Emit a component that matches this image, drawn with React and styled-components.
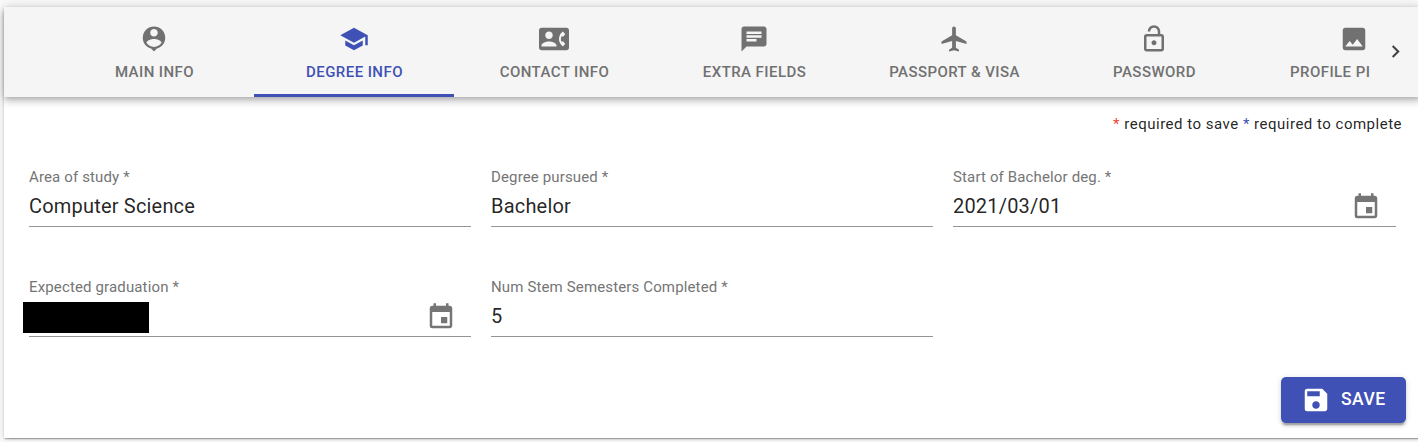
import React from "react";
import styled, { createGlobalStyle } from "styled-components";
import {
  MdPersonPin, MdSchool, MdContactPhone, MdChat, MdLocalAirport,
  MdImage, MdChevronRight, MdSave, MdEvent, MdOutlineLockOpen,
} from "react-icons/md";

const GlobalStyle = createGlobalStyle`
  *, *::before, *::after { box-sizing: border-box; }
  body {
    margin: 0;
    background: #fafafa;
    font-family: Roboto, "Liberation Sans", sans-serif;
    overflow: hidden;
  }
`;

const Page = styled.div`
  height: 442px;
  padding: 7px 0 0 4px;
  overflow: hidden;
`;

const Card = styled.main`
  display: flex;
  flex-direction: column;
  width: 1417px;
  height: 431px;
  background: #fff;
  box-shadow: 0 2.5px 1.25px -1.25px rgba(0, 0, 0, 0.2),
    0 1.25px 1.25px rgba(0, 0, 0, 0.14), 0 1.25px 3.75px rgba(0, 0, 0, 0.12),
    0 0 10px rgba(0, 0, 0, 0.08);
`;

const TabBar = styled.header`
  display: flex;
  flex: none;
  height: 90px;
  padding-left: 50px;
  background: #f5f5f5;
  box-shadow: 0 2.5px 5px -1.25px rgba(0, 0, 0, 0.2),
    0 5px 6.25px rgba(0, 0, 0, 0.14), 0 1.25px 12.5px rgba(0, 0, 0, 0.12);
`;

const TabList = styled.nav`
  display: flex;
  flex: none;
  width: 1316px;
  overflow: hidden;
`;

const Tab = styled.button`
  display: flex;
  flex: none;
  flex-direction: column;
  align-items: center;
  width: 200px;
  padding: 17px 0 0;
  border: 0;
  border-bottom: 3px solid ${(p) => (p.$active ? "#3f51b5" : "transparent")};
  background: none;
  color: ${(p) => (p.$active ? "#3f51b5" : "#717171")};
  font: 500 15px/20px Roboto, sans-serif;
  letter-spacing: 0.43px;
  white-space: nowrap;

  svg { width: 30px; height: 30px; margin-bottom: 8px; }
`;

const TabText = styled.span`
  padding-left: 1px;
`;

const ScrollButton = styled.button`
  display: flex;
  flex: none;
  align-items: center;
  justify-content: center;
  width: 50px;
  padding: 0 0 2px;
  border: 0;
  background: none;
  color: #424242;

  svg { width: 25px; height: 25px; }
`;

const Legend = styled.p`
  margin: 17px 19px 0 0;
  color: rgba(0, 0, 0, 0.87);
  font-size: 15px;
  line-height: 20px;
  letter-spacing: 0.5px;
  text-align: right;
`;

const Mark = styled.span`
  color: ${(p) => p.$color};
`;

const Fields = styled.form`
  display: grid;
  grid-template-columns: 442px 442px 443px;
  gap: 50px 20px;
  padding: 33px 25px 0;
`;

const FieldBox = styled.label`
  display: flex;
  flex-direction: column;
  height: 60px;
  border-bottom: 1px solid #949494;
`;

const FieldLabel = styled.span`
  color: #757575;
  font-size: 15px;
  line-height: 20px;
  letter-spacing: 0.14px;
`;

const FieldRow = styled.span`
  display: flex;
  align-items: center;
  justify-content: space-between;
  height: 39px;
  padding-right: 15px;
  color: #757575;

  svg { width: 30px; height: 30px; }
`;

const Value = styled.span`
  padding-bottom: 2px;
  color: rgba(0, 0, 0, 0.87);
  font-size: 20px;
  line-height: 24px;
  letter-spacing: 0.19px;
`;

const Redaction = styled.span`
  width: 126px;
  height: 31px;
  margin: 1px 0 0 -6px;
  background: #000;
`;

const Actions = styled.footer`
  display: flex;
  justify-content: flex-end;
  margin-top: 40px;
  padding-right: 15px;
`;

const SaveButton = styled.button`
  display: flex;
  align-items: center;
  gap: 10px;
  width: 125px;
  height: 46px;
  padding: 0 20px;
  border: 0;
  border-radius: 5px;
  background: #3f51b5;
  color: #fff;
  font: 500 17.5px/22px Roboto, sans-serif;
  letter-spacing: 0.5px;
  box-shadow: 0 3.75px 1.25px -2.5px rgba(0, 0, 0, 0.2),
    0 2.5px 2.5px rgba(0, 0, 0, 0.14), 0 1.25px 6.25px rgba(0, 0, 0, 0.12);

  svg { flex: none; width: 30px; height: 30px; }
`;

const SaveText = styled.span`
  padding-bottom: 2px;
`;

const tabs = [
  ["Main Info", MdPersonPin],
  ["Degree Info", MdSchool],
  ["Contact Info", MdContactPhone],
  ["Extra Fields", MdChat],
  ["Passport & Visa", MdLocalAirport],
  ["Password", MdOutlineLockOpen],
  ["Profile Picture", MdImage],
];

const fields = [
  { label: "Area of study", value: "Computer Science" },
  { label: "Degree pursued", value: "Bachelor" },
  { label: "Start of Bachelor deg.", value: "2021/03/01", date: true },
  { label: "Expected graduation", hidden: true, date: true },
  { label: "Num Stem Semesters Completed", value: "5" },
];

function Field({ label, value, date, hidden }) {
  return (
    <FieldBox>
      <FieldLabel>{label} *</FieldLabel>
      <FieldRow>
        {hidden ? <Redaction /> : <Value>{value}</Value>}
        {date && <MdEvent />}
      </FieldRow>
    </FieldBox>
  );
}

export default function App() {
  return (
    <Page>
      <GlobalStyle />
      <Card>
        <TabBar>
          <TabList>
            {tabs.map(([name, Icon]) => (
              <Tab key={name} $active={name === "Degree Info"}>
                <Icon />
                <TabText>{name.toUpperCase()}</TabText>
              </Tab>
            ))}
          </TabList>
          <ScrollButton aria-label="Next tabs"><MdChevronRight /></ScrollButton>
        </TabBar>
        <Legend>
          <Mark $color="#f44336">*</Mark> required to save{" "}
          <Mark $color="#3f51b5">*</Mark> required to complete
        </Legend>
        <Fields>
          {fields.map((f) => <Field key={f.label} {...f} />)}
        </Fields>
        <Actions>
          <SaveButton><MdSave /><SaveText>SAVE</SaveText></SaveButton>
        </Actions>
      </Card>
    </Page>
  );
}
